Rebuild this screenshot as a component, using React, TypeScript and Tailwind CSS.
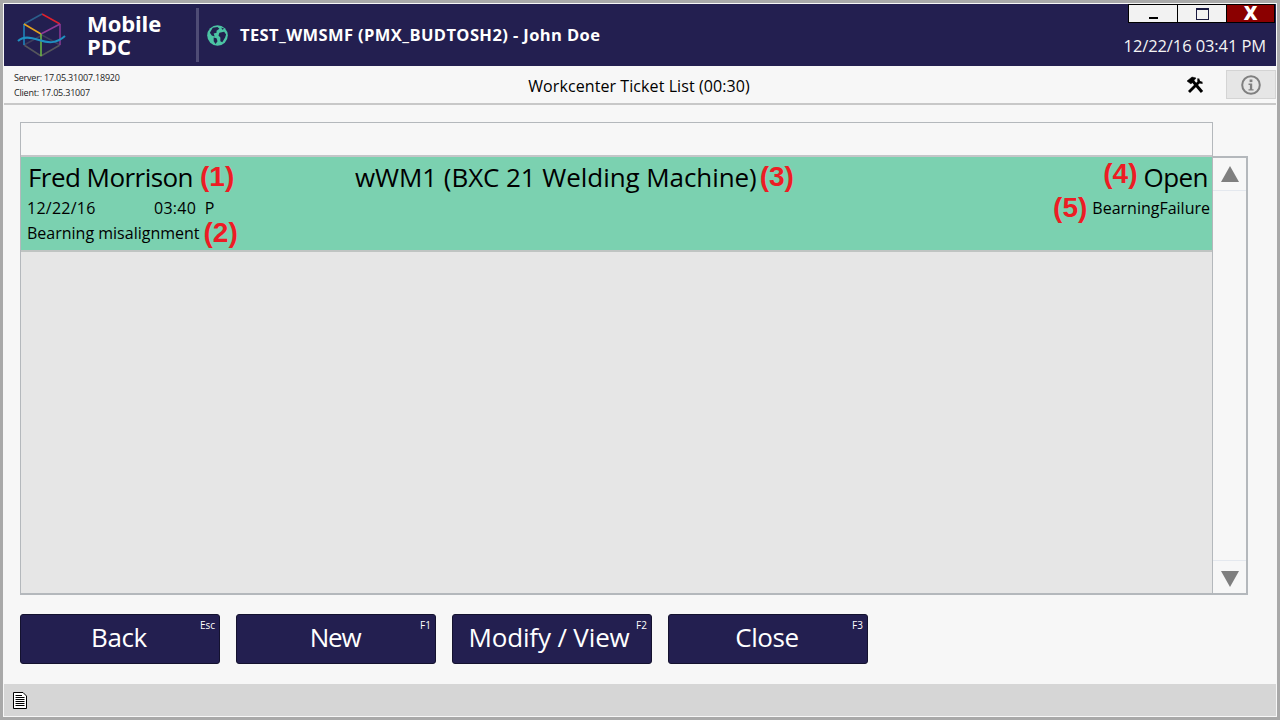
import type { ReactNode } from "react";

const font = "font-['Open_Sans','Noto_Sans',sans-serif]";

function Logo() {
  return (
    <svg width="50" height="50" viewBox="0 0 50 50" fill="none" strokeWidth="1.5" className="shrink-0">
      <path d="M7 35 L24 46 L43 35" stroke="#55565c" />
      <path d="M7 35 L25 25 L43 35" stroke="#3f3e5c" />
      <path d="M25 4 L43 14" stroke="#e0202c" />
      <path d="M25 4 L7 14" stroke="#2b5f8c" />
      <path d="M7 14 L7 35" stroke="#1e88c0" />
      <path d="M7 14 L24 24" stroke="#e3a21f" />
      <path d="M24 24 L43 14" stroke="#8e3a96" />
      <path d="M43 14 L43 35" stroke="#8e3a96" />
      <path d="M24 24 L24 46" stroke="#6fbe44" />
      <path d="M1 31 C6 26 13 27 22 30 C31 33 39 34 48 26" stroke="#1f8fc0" strokeWidth="2" />
    </svg>
  );
}

function Globe() {
  return (
    <svg width="21" height="21" viewBox="0 0 22 22" className="shrink-0">
      <circle cx="11" cy="11" r="10.8" fill="#4cc4a4" />
      <path
        d="M6 3 L11 2 L13 4 L10 6 L10 8 L7 9 L8 12 L5 11 L3 8 Z M13 8 L18 7 L20 10 L19 13 L16 18 L14 17 L14 13 L12 11 Z M7 13 L10 14 L11 17 L9 20 L7 17 Z M15 2.5 L18 4 L16 5 Z"
        fill="#22204e"
      />
    </svg>
  );
}

function Tools() {
  return (
    <svg width="18" height="18" viewBox="0 0 18 18" fill="none" stroke="#000" className="shrink-0">
      <path d="M5 3 L16 16" strokeWidth="3" />
      <path d="M14 5 L3 16" strokeWidth="2.8" />
      <path d="M1 5 L6 1 L10 2 L5 8 Z" fill="#000" strokeWidth="0.5" />
      <path d="M12.5 2.5 A3.2 3.2 0 0 0 16.5 6.5" strokeWidth="2.2" />
    </svg>
  );
}

function Info() {
  return (
    <svg width="20" height="20" viewBox="0 0 20 20" fill="none">
      <circle cx="10" cy="10" r="8.8" stroke="#808080" strokeWidth="2" />
      <rect x="8.6" y="4.5" width="2.8" height="2.6" fill="#808080" />
      <path d="M7.5 8.6 H11.2 V14.2 H12.6 V15.6 H7.5 V14.2 H8.9 V10 H7.5 Z" fill="#808080" />
    </svg>
  );
}

function DocIcon() {
  return (
    <svg width="14" height="17" viewBox="0 0 14 17" fill="none" className="shrink-0">
      <path d="M0.5 0.5 H10 L13.5 4 V16.5 H0.5 Z" fill="#fff" stroke="#000" />
      <path d="M2.5 3.5 H9 M2.5 5.5 H11.5 M2.5 7.5 H11.5 M2.5 9.5 H11.5 M2.5 11.5 H11.5 M2.5 13.5 H11.5" stroke="#000" />
    </svg>
  );
}

function Mark({ children }: { children: ReactNode }) {
  return (
    <span className="font-['Liberation_Sans',sans-serif] text-[28px] leading-none font-bold text-[#ed1c24]">
      {children}
    </span>
  );
}

function ActionButton({ label, hint, tracking }: { label: string; hint: string; tracking: string }) {
  return (
    <button
      type="button"
      className="relative flex h-[50px] w-[200px] items-center justify-center rounded-[3px] border border-[#14122f] bg-[#231f50] pr-[2px] pb-[3px] text-[26px] text-white"
    >
      <span className={tracking}>{label}</span>
      <span className="absolute top-[3px] right-[4px] text-[10px] leading-[14px] font-medium">{hint}</span>
    </button>
  );
}

export default function App() {
  return (
    <div className={`${font} flex h-[720px] w-[1280px] flex-col overflow-hidden border-[3px] border-[#a9a9a9] bg-[#f7f7f7] text-black`}>
      <div className="mx-px mt-px flex h-[62px] shrink-0 items-stretch bg-[#231f50] text-white">
        <div className="flex w-[192px] items-center pl-[13px]">
          <Logo />
          <div className="ml-[20px] text-[22px] font-bold tracking-[-0.1px]">
            <div className="leading-[23px]">Mobile</div>
            <div className="leading-[23px]">PDC</div>
          </div>
        </div>
        <div className="my-[4px] w-[3px] bg-[#4f4c75]" />
        <div className="flex flex-1 items-center pl-[8px]">
          <Globe />
          <span className="ml-[12px] text-[16.5px] font-bold tracking-[0.4px]">TEST_WMSMF (PMX_BUDTOSH2) - John Doe</span>
        </div>
        <div className="flex flex-col items-end pr-[1px]">
          <div className="flex h-[19px] border border-black">
            <div className="flex w-[48px] items-end justify-center bg-[#f2f2f2] pb-[3px]">
              <div className="h-[2px] w-[9px] bg-black" />
            </div>
            <div className="flex w-[49px] items-center justify-center border-l border-black bg-[#f2f2f2]">
              <div className="h-[12px] w-[13px] border border-t-[2px] border-[#1a1a40]" />
            </div>
            <div className="flex w-[48px] items-center justify-center border-l border-black bg-[#8b0000] text-[19px] leading-none font-extrabold">
              X
            </div>
          </div>
          <div className="mt-[12px] pr-[9px] text-[16.5px] leading-[22px] tracking-[-0.1px] text-[#f4f4f4]">12/22/16 03:41 PM</div>
        </div>
      </div>

      <div className="mx-px flex h-[39px] shrink-0 items-center border-b-2 border-[#c8c8c8]">
        <div className="w-[330px] pl-[10px] text-[9px] leading-[15px] tracking-[-0.2px] text-[#222]">
          <div>Server: 17.05.31007.18920</div>
          <div>Client: 17.05.31007</div>
        </div>
        <div className="mt-[2px] flex-1 pr-[2px] text-center text-[16px] tracking-[0.08px]">Workcenter Ticket List (00:30)</div>
        <div className="flex w-[330px] items-center justify-end">
          <Tools />
          <div className="mr-0 ml-[22px] flex h-[29px] w-[50px] items-center justify-center border border-[#d4d4d4] bg-[#e6e6e6]">
            <Info />
          </div>
        </div>
      </div>

      <div className="flex min-h-0 flex-1 flex-col px-[17px] pt-[17px]">
        <div className="flex h-[473px] shrink-0 items-start">
          <div className="flex h-full w-[1193px] flex-col border border-b-2 border-[#b4b8bc]">
            <div className="h-[34px] shrink-0 border-b-2 border-[#c4c6c8]" />
            <div className="relative h-[95px] shrink-0 border-b-2 border-[#bfc4c2] bg-[#7bd1b0]">
              <div className="flex items-start justify-between pt-[2px] pr-[4px] pl-[6px]">
                <div className="flex w-[328px] items-center gap-[7px]">
                  <span className="ml-px text-[26px] leading-[36px] tracking-[-0.55px]">Fred Morrison</span>
                  <Mark>(1)</Mark>
                </div>
                <div className="flex flex-1 items-center gap-[3px]">
                  <span className="text-[26px] leading-[36px] tracking-[-0.07px]">wWM1 (BXC 21 Welding Machine)</span>
                  <Mark>(3)</Mark>
                </div>
                <div className="flex items-center gap-[6px]">
                  <span className="-mt-[6px]">
                    <Mark>(4)</Mark>
                  </span>
                  <span className="text-[26px] leading-[36px] tracking-[-0.55px]">Open</span>
                </div>
              </div>
              <div className="mt-[1px] flex h-[24px] items-center justify-between pr-[2px] pl-[6px] text-[16px]">
                <div className="flex tracking-[0.25px]">
                  <span className="w-[127px]">12/22/16</span>
                  <span>03:40&nbsp;&nbsp;P</span>
                </div>
                <div className="flex items-center gap-[5px]">
                  <Mark>(5)</Mark>
                  <span>BearningFailure</span>
                </div>
              </div>
              <div className="mt-px flex h-[24px] items-center gap-[4px] pl-[6px] text-[16px]">
                <span>Bearning misalignment</span>
                <Mark>(2)</Mark>
              </div>
            </div>
            <div className="flex-1 bg-[#e6e6e6]" />
          </div>
          <div className="mt-[34px] flex h-[439px] w-[35px] flex-col justify-between border-2 border-l-0 border-[#b4b8bc]">
            <div className="flex h-[33px] items-start justify-center border-b border-[#e4e8ee] pt-[8px]">
              <div className="h-0 w-0 border-x-[9px] border-b-[16px] border-x-transparent border-b-[#7f7f7f]" />
            </div>
            <div className="flex h-[33px] items-start justify-center border-t border-[#e4e8ee] pt-[10px]">
              <div className="h-0 w-0 border-x-[9px] border-t-[16px] border-x-transparent border-t-[#7f7f7f]" />
            </div>
          </div>
        </div>
        <div className="mt-[19px] flex gap-[16px]">
          <ActionButton label="Back" hint="Esc" tracking="tracking-[-0.4px]" />
          <ActionButton label="New" hint="F1" tracking="tracking-[-1.2px]" />
          <ActionButton label="Modify / View" hint="F2" tracking="mr-[4px] tracking-[-0.15px]" />
          <ActionButton label="Close" hint="F3" tracking="tracking-[-0.4px]" />
        </div>
      </div>

      <div className="mx-px mb-px flex h-[32px] shrink-0 items-center bg-[#d6d6d6] pl-[9px]">
        <DocIcon />
      </div>
    </div>
  );
}
